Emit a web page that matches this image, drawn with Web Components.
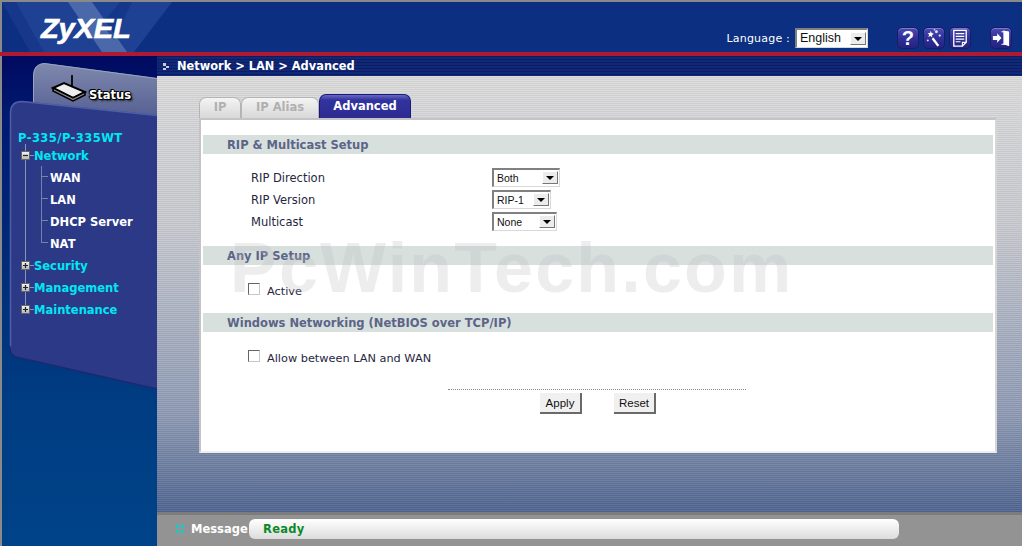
<!DOCTYPE html>
<html>
<head>
<meta charset="utf-8">
<title>ZyXEL P-335</title>
<style>
  html, body { margin: 0; padding: 0; height: 100%; overflow: hidden; background: #0a2a7a; }
</style>
</head>
<body>
<zy-app></zy-app>

<script>
/* ================= HELPERS ================= */
class ShadowEl extends HTMLElement {
  constructor() {
    super();
    this.attachShadow({ mode: "open" });
  }
  connectedCallback() {
    this.shadowRoot.innerHTML = this.render();
  }
}

/* ================= TOP BAR ================= */
class ZyHeader extends ShadowEl {
  render() {
    return `
      <style>
        :host { display: flex; height: 50px; position: relative; background: #0c2f82; border-top: 2px solid #8a8a8a; border-left: 2px solid #8a8a8a; align-items: flex-start; overflow: hidden; }
        .art { position: absolute; left: 0; top: 0; }
        .logo { position: relative; margin: 12px 0 0 39px; font: italic 700 27px "Liberation Sans", Arial, sans-serif; color: #fff; -webkit-text-stroke: .6px #fff; letter-spacing: -0.2px; transform: scaleX(1.08); transform-origin: left; line-height: 30px; }
        .right { margin-left: auto; display: flex; align-items: center; margin-top: 25px; padding-right: 10px; }
        .lang { font: 11px/14px "DejaVu Sans", Verdana, sans-serif; color: #fff; letter-spacing: .2px; margin-right: 5px; padding-top: 2px; }
        zy-select { margin-right: 29px; }
        .icons { display: flex; gap: 4px; }
        .icons zy-icon:last-child { margin-left: 15px; }
      </style>
      <svg class="art" width="172" height="50" viewBox="0 0 172 50">
        <polygon points="0,0 170,0 132,50 36,50" fill="#1f4194"/>
        <polygon points="66,0 90,0 125,50 100,50" fill="#4a68aa"/>
        <polygon points="130,0 118,0 100,22 112,38" fill="#0c2f82" opacity=".55"/>
        <polygon points="0,0 14,0 42,50 28,50" fill="#17378a"/>
      </svg>
      <div class="logo">ZyXEL</div>
      <div class="right">
        <span class="lang">Language :</span>
        <zy-select value="English" w="73" big></zy-select>
        <div class="icons">
          <zy-icon name="help"></zy-icon>
          <zy-icon name="wizard"></zy-icon>
          <zy-icon name="log"></zy-icon>
          <zy-icon name="logout"></zy-icon>
        </div>
      </div>`;
  }
}

class ZyIcon extends ShadowEl {
  render() {
    const g = {
      help: `<text x="11.5" y="18.500" text-anchor="middle" font-family="Liberation Sans, Arial, sans-serif" font-weight="700" font-size="21" fill="#fff">?</text>`,
      wizard: `<path d="M11 11 L17 19 L15 20.5 L9 12.5 Z" fill="#fff"/><path d="M8 4l1 2.4 2.4.6-2 1.5.3 2.5-1.9-1.5-2.2 1 .8-2.4L5 6.3l2.4-.1z" fill="#fff"/><circle cx="14" cy="5" r="1.5" fill="#dfe3ff"/><circle cx="17.5" cy="9" r="1.2" fill="#dfe3ff"/><circle cx="5" cy="14" r="1" fill="#dfe3ff"/><circle cx="12" cy="2.8" r=".8" fill="#dfe3ff"/>`,
      log: `<path d="M5 3.5H18V16L14 20H5Z" fill="none" stroke="#fff" stroke-width="1.4"/><path d="M7 7h9M7 9.8h9M7 12.6h9M7 15.4h5" stroke="#fff" stroke-width="1.2"/><path d="M14 20v-4h4" fill="none" stroke="#fff" stroke-width="1.2"/>`,
      logout: `<path d="M14 3.5L20 5.5V20L14 18Z" fill="#fff"/><path d="M12 5H19V18H12" fill="none" stroke="#fff" stroke-width="1.2"/><path d="M3 9.5H7.5V6.5L12 11.5 7.5 16.5V13.5H3Z" fill="#fff"/>`
    };
    return `
      <style>
        :host { display: block; width: 22px; height: 22px; box-sizing: border-box; border-radius: 5px; border: 1px solid #1a1a66; background: linear-gradient(#4b4bb5, #2e2e96 55%, #23237f); box-shadow: inset 0 1px 0 #7a7ad0; overflow: hidden; }
        svg { display: block; margin: -1px; }
      </style>
      <svg width="22" height="22" viewBox="0 0 23 23">${g[this.getAttribute("name")]}</svg>`;
  }
}

/* ================= FORM BITS ================= */
class ZySelect extends ShadowEl {
  render() {
    const big = this.hasAttribute("big");
    return `
      <style>
        :host { display: inline-block; width: ${this.getAttribute("w")}px; height: ${big ? 20 : 19}px; box-sizing: border-box; background: #fff; }
        .box { height: 100%; box-sizing: border-box; display: flex; align-items: center; border-top: 2px solid #808080; border-left: 2px solid #808080; border-right: 1px solid #d8d8d8; border-bottom: 1px solid #d8d8d8; background: #fff; }
        .val { flex: 1; padding-left: 3px; padding-bottom: ${big ? 2 : 0}px; font: ${big ? "12.5px" : "10.5px"} "Liberation Sans", Arial, sans-serif; color: #111; white-space: nowrap; }
        .btn { width: 16px; height: 13px; margin-right: 1px; background: #ececec; border: 1px solid; border-color: #fff #777 #777 #fff; display: flex; align-items: center; justify-content: center; box-sizing: border-box; }
        .btn i { width: 0; height: 0; border: 4px solid transparent; border-top: 4px solid #000; border-bottom: 0; }
      </style>
      <div class="box"><span class="val">${this.getAttribute("value")}</span><span class="btn"><i></i></span></div>`;
  }
}

class ZyCheck extends ShadowEl {
  render() {
    return `
      <style>
        :host { display: flex; align-items: center; gap: 7px; font: 11.3px/14px "DejaVu Sans", Verdana, sans-serif; color: #262640; }
        i { width: 12px; height: 12px; box-sizing: border-box; background: #fff; border: 1px solid; border-color: #666 #c8c8c8 #c8c8c8 #666; margin-top: -5px; }
        span { padding-top: 2px; }
      </style>
      <i></i><span><slot></slot></span>`;
  }
}

class ZyButton extends ShadowEl {
  render() {
    return `
      <style>
        :host { display: flex; align-items: center; justify-content: center; width: 42px; height: 21px; box-sizing: border-box; padding-top: 1px; background: #f0f0f0; border: 1px solid; border-width: 0 2px 2px 0; border-color: #6a6a6a; font: 11.5px "Liberation Sans", Arial, sans-serif; color: #111; }
      </style>
      <slot></slot>`;
  }
}

/* ================= SIDEBAR ================= */
class ZyTreeItem extends ShadowEl {
  render() {
    const state = this.getAttribute("state");
    if (!state) {
      return `
        <style>
          :host { display: flex; align-items: center; height: 22px; box-sizing: border-box; padding: 2px 0 0 50px; font: 700 11.5px "DejaVu Sans", Verdana, sans-serif; color: #fff; position: relative; }
          .m { position: absolute; left: 25px; top: 0; width: 1px; height: 100%; background: #8d92b8; }
          .h { position: absolute; left: 42px; top: 10px; width: 6px; height: 1px; background: #7a80a8; }
          .v { position: absolute; left: 41px; top: 0; width: 1px; height: 100%; background: #7a80a8; }
          :host([last]) .v { height: 11px; }
        </style>
        <i class="m"></i><i class="v"></i><i class="h"></i><slot></slot>`;
    }
    return `
      <style>
        :host { display: flex; align-items: center; height: 22px; box-sizing: border-box; padding: 2px 0 0 34px; font: 700 11.5px "DejaVu Sans", Verdana, sans-serif; color: #00e8f4; position: relative; }
        .line { position: absolute; left: 25px; top: 0; bottom: 0; width: 1px; background: #8d92b8; }
        :host([last]) .line { bottom: 11px; }
        .h { position: absolute; left: 30px; top: 11px; width: 4px; height: 1px; background: #8d92b8; }
        .box { position: absolute; left: 21px; top: 7px; width: 9px; height: 9px; box-sizing: border-box; background: linear-gradient(#f2f2f2, #b8b8b8); border: 1px solid #666; display: flex; align-items: center; justify-content: center; }
        .box svg { display: block; }
      </style>
      <i class="line"></i><i class="h"></i>
      <span class="box"><svg width="7" height="7" viewBox="0 0 7 7"><path d="M1 3.5H6${state === "plus" ? "M3.5 1V6" : ""}" stroke="#222" stroke-width="1.2"/></svg></span>
      <slot></slot>`;
  }
}

class ZySidebar extends ShadowEl {
  render() {
    return `
      <style>
        :host { display: block; position: relative; width: 157px; height: 100%; background: linear-gradient(#000a60 0, #001a70 60px, #003c82 340px, #004388); border-left: 2px solid #8a8a8a; box-sizing: border-box; overflow: hidden; }
        svg.shape { position: absolute; left: -2px; top: -56px; }
        .status { position: absolute; left: 87px; top: 32px; font: 700 11.5px "DejaVu Sans", Verdana, sans-serif; color: #fff; text-shadow: 1px 0 #000, -1px 0 #000, 0 1px #000, 0 -1px #000, 1px 1px #000, -1px -1px #000, 2px 2px 2px #222; }
        .tree { position: absolute; left: -2px; top: 72px; width: 155px; }
        .model { height: 16px; padding-left: 18px; font: 700 11.5px/20px "DejaVu Sans", Verdana, sans-serif; color: #00e8f4; letter-spacing: .45px; }
      </style>
      <svg class="shape" width="157" height="400" viewBox="0 0 157 400">
        <defs>
          <linearGradient id="tab" x1="0" y1="0" x2="0" y2="1"><stop offset="0" stop-color="#7f89ad"/><stop offset="1" stop-color="#4f5a90"/></linearGradient>
        </defs>
        <path d="M33 112V75Q34 64 44 63L157 78V125H33Z" fill="url(#tab)"/>
        <path d="M33.5 110V75Q34 64 44 63.5L157 78.5" fill="none" stroke="#9aa2c0" stroke-width="1"/>
        <path d="M10 348V112Q11 101 22 101L157 115V389L16 357Q10 355 10 348Z" fill="#2b3987"/>
        <path d="M10.5 346V112Q11 101.500 22 101.500L157 115.500" fill="none" stroke="#4f5fa6" stroke-width="1.500"/>
        <path d="M157 389L16 357Q10 355 10 348" fill="none" stroke="#1a2a70" stroke-width="1.500"/>
        <!-- router icon -->
        <path d="M72 75V87" stroke="#111" stroke-width="2"/>
        <path d="M53 88L64 83L85 92L73 98Z" fill="#eee" stroke="#000" stroke-width="2"/>
        <path d="M53 88V91L73 101L85 95V92L73 98Z" fill="#8f8f8f" stroke="#000" stroke-width="1.500"/>
      </svg>
      <div class="status">Status</div>
      <div class="tree">
        <div class="model">P-335/P-335WT</div>
        <zy-tree-item state="minus">Network</zy-tree-item>
        <zy-tree-item>WAN</zy-tree-item>
        <zy-tree-item>LAN</zy-tree-item>
        <zy-tree-item>DHCP Server</zy-tree-item>
        <zy-tree-item last>NAT</zy-tree-item>
        <zy-tree-item state="plus">Security</zy-tree-item>
        <zy-tree-item state="plus">Management</zy-tree-item>
        <zy-tree-item state="plus" last>Maintenance</zy-tree-item>
      </div>`;
  }
}

/* ================= TABS ================= */
class ZyTabs extends ShadowEl {
  render() {
    const tabs = [["IP", 42, 0], ["IP Alias", 78, 0], ["Advanced", 92, 1]];
    return `
      <style>
        :host { display: flex; align-items: flex-end; height: 24px; }
        .t { box-sizing: border-box; height: 24px; display: flex; align-items: center; justify-content: center; font: 700 11.5px "DejaVu Sans", Verdana, sans-serif; border-radius: 7px 7px 0 0; }
        .off { color: #b0b0b0; background: linear-gradient(#f4f4f4, #d8d8d8); border: 1px solid #b4b4b4; border-bottom: 0; height: 21px; padding-bottom: 3px; }
        .on { color: #fff; background: linear-gradient(#6868c0 0, #3333a0 5px, #2b2b90); border: 1px solid #1a1a78; border-bottom: 0; padding-bottom: 1px; }
      </style>
      ${tabs.map(t => `<div class="t ${t[2] ? "on" : "off"}" style="width:${t[1]}px">${t[0]}</div>`).join("")}`;
  }
}

class ZySection extends ShadowEl {
  render() {
    return `
      <style>
        :host { display: block; height: 19px; margin: 0 2px; background: #d8e0de; padding-left: 24px; font: 700 11.5px/21px "DejaVu Sans", Verdana, sans-serif; color: #5c6488; }
      </style>
      <slot></slot>`;
  }
}

class ZyRow extends ShadowEl {
  render() {
    return `
      <style>
        :host { display: flex; align-items: center; height: 22px; padding-left: 50px; font: 11.5px "DejaVu Sans", Verdana, sans-serif; color: #262640; }
        .l { width: 241px; padding-top: 2px; }
      </style>
      <span class="l">${this.getAttribute("label")}</span><slot></slot>`;
  }
}

/* ================= FORM PANEL ================= */
class ZyPanel extends ShadowEl {
  render() {
    return `
      <style>
        :host { display: block; width: 798px; height: 335px; box-sizing: border-box; background: #fff; border: 2px solid #c4c4c4; border-right-color: #d6d6d6; border-bottom-color: #eee; padding-top: 15px; }
        .rows { padding: 12px 0 14px; }
        .check { padding-left: 47px; }
        .c1 { padding-top: 18px; padding-bottom: 14px; }
        .c2 { padding-top: 18px; padding-bottom: 23px; }
        .actions { width: 298px; margin-left: 247px; box-sizing: border-box; border-top: 1px dotted #888; padding: 3px 0 0 92px; display: flex; gap: 32px; }
      </style>
      <zy-section>RIP &amp; Multicast Setup</zy-section>
      <div class="rows">
        <zy-row label="RIP Direction"><zy-select value="Both" w="68"></zy-select></zy-row>
        <zy-row label="RIP Version"><zy-select value="RIP-1" w="59"></zy-select></zy-row>
        <zy-row label="Multicast"><zy-select value="None" w="65"></zy-select></zy-row>
      </div>
      <zy-section>Any IP Setup</zy-section>
      <div class="check c1"><zy-check>Active</zy-check></div>
      <zy-section>Windows Networking (NetBIOS over TCP/IP)</zy-section>
      <div class="check c2"><zy-check>Allow between LAN and WAN</zy-check></div>
      <div class="actions"><zy-button>Apply</zy-button><zy-button>Reset</zy-button></div>`;
  }
}

/* ================= MAIN AREA ================= */
class ZyMain extends ShadowEl {
  render() {
    return `
      <style>
        :host { display: flex; flex-direction: column; flex: 1; min-width: 0; height: 100%; position: relative; }
        .crumb { height: 20px; display: flex; align-items: center; padding-left: 6px; gap: 7px; font: 700 11.4px "DejaVu Sans", Verdana, sans-serif; color: #fff; background: repeating-linear-gradient(#141a62 0 1px, #0d2a78 1px 3px); }
        .mark { width: 7px; height: 7px; display: block; }
        .body { flex: 1; min-height: 0; padding: 18px 0 0 42px; background: repeating-linear-gradient(rgba(255,255,255,.08) 0 1px, rgba(0,0,0,.05) 1px 2px), linear-gradient(#dcdcdc 0, #c8cad0 150px, #8e9ab4 340px, #4e6490 437px); }
        .mark-text { position: absolute; left: 73px; top: 177px; font: 700 70px/70px "Liberation Sans", Arial, sans-serif; color: rgba(190,190,190,.27); letter-spacing: 2.2px; white-space: nowrap; }
        zy-footer { flex: none; }
      </style>
      <div class="crumb">
        <svg class="mark" viewBox="0 0 7 7"><path d="M0 0h3v3H0zM3 3h3v2H3zM0 5h3v2H0z" fill="#c8c8d8"/></svg>
        <span>Network &gt; LAN &gt; Advanced</span>
      </div>
      <div class="body">
        <zy-tabs></zy-tabs>
        <zy-panel></zy-panel>
      </div>
      <zy-footer></zy-footer>
      <div class="mark-text">PcWinTech.com</div>`;
  }
}

class ZyFooter extends ShadowEl {
  render() {
    return `
      <style>
        :host { display: flex; align-items: center; height: 34px; box-sizing: border-box; background: #939393; border-top: 3px solid #7c7c7c; padding: 0 0 4px 19px; font: 700 11.5px "DejaVu Sans", Verdana, sans-serif; }
        .dots { display: block; margin-right: 7px; }
        .m { color: #fff; width: 58px; }
        .bar { width: 650px; height: 20px; border-radius: 6px; background: linear-gradient(#fff, #dcdcdc); color: #0a8a2a; letter-spacing: .3px; line-height: 20px; padding-left: 14px; box-sizing: border-box; }
      </style>
      <svg class="dots" width="8" height="8" viewBox="0 0 8 8"><path d="M0 0h3v3H0zM5 0h3v3H5zM0 5h3v3H0zM5 5h3v3H5z" fill="#19c8c8"/></svg>
      <span class="m">Message</span><div class="bar">Ready</div>`;
  }
}

/* ================= PAGE ================= */
class ZyApp extends ShadowEl {
  render() {
    return `
      <style>
        :host { display: grid; grid-template-rows: 52px 4px 490px; width: 1022px; height: 546px; overflow: hidden; background: #0c2f82; }
        .red { background: #ae1a32; }
        .row { display: flex; min-height: 0; }
      </style>
      <zy-header></zy-header>
      <div class="red"></div>
      <div class="row"><zy-sidebar></zy-sidebar><zy-main></zy-main></div>`;
  }
}

customElements.define("zy-header", ZyHeader);
customElements.define("zy-icon", ZyIcon);
customElements.define("zy-select", ZySelect);
customElements.define("zy-check", ZyCheck);
customElements.define("zy-button", ZyButton);
customElements.define("zy-tree-item", ZyTreeItem);
customElements.define("zy-sidebar", ZySidebar);
customElements.define("zy-tabs", ZyTabs);
customElements.define("zy-section", ZySection);
customElements.define("zy-row", ZyRow);
customElements.define("zy-panel", ZyPanel);
customElements.define("zy-main", ZyMain);
customElements.define("zy-footer", ZyFooter);
customElements.define("zy-app", ZyApp);
</script>
</body>
</html>
